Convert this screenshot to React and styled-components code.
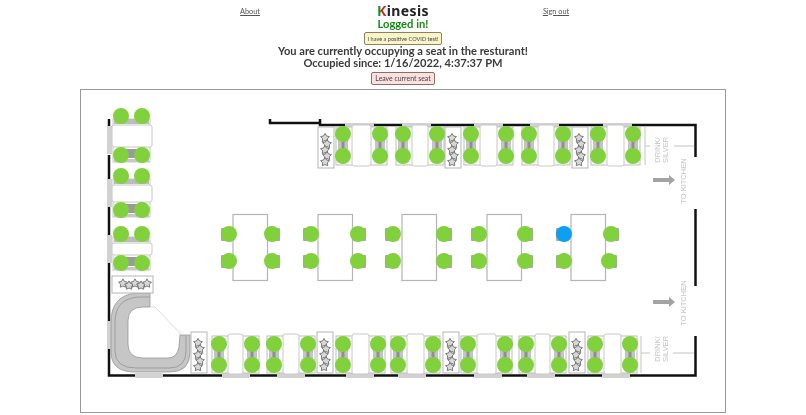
import React from 'react'
import styled, { createGlobalStyle } from 'styled-components'

const GlobalStyle = createGlobalStyle`
  html, body {
    margin: 0;
    background: #fff;
  }
  body {
    font-family: Lato, "Noto Sans", sans-serif;
    color: #3a3a3a;
  }
`

const Page = styled.div`
  width: 806px;
  height: 415px;
  display: flex;
  flex-direction: column;
  align-items: center;
  overflow: hidden;
  filter: blur(0.35px);
`
const TopBar = styled.header`
  display: grid;
  grid-template-columns: repeat(3, 153px);
  justify-items: center;
  align-items: center;
  height: 14px;
  margin-top: 4px;
`
const NavLink = styled.a`
  font-size: 7.3px;
  color: #555;
  text-decoration: underline;
`
const Brand = styled.h1`
  margin: 0;
  font-family: "Noto Sans", sans-serif;
  font-size: 14px;
  line-height: 14px;
  font-weight: 700;
  letter-spacing: 0.4px;
  color: #222;
  span {
    background: linear-gradient(90deg, #1d8a2c 0 45%, #d8201c 45% 100%);
    -webkit-background-clip: text;
    background-clip: text;
    color: transparent;
  }
`
const LoggedIn = styled.div`
  font-size: 11.2px;
  line-height: 12px;
  font-weight: 700;
  color: #168a16;
`
const ActionButton = styled.button`
  display: block;
  height: 13px;
  margin-top: ${p => p.$gap}px;
  padding: 0 3px;
  font-family: inherit;
  font-size: ${p => p.$size}px;
  line-height: 11px;
  color: #444;
  border: 1px solid ${p => p.$edge};
  border-radius: 2px;
  background: ${p => p.$fill};
`
const Notice = styled.div`
  font-size: 11.1px;
  line-height: 12px;
  font-weight: 700;
  text-align: center;
`
const FloorMap = styled.div`
  position: relative;
  box-sizing: border-box;
  width: 646px;
  height: 324px;
  margin-top: 4px;
  border: 1px solid #9a9a9a;
`
const FloorPlan = styled.svg`
  display: block;
  width: 644px;
  height: 322px;
`
const Seat = styled.div`
  position: absolute;
  width: 16px;
  height: 16px;
  border-radius: 50%;
  background: ${p => (p.$mine ? '#0d9ff0' : '#80d13b')};
`

const LEFT_PAIRS = [[116, 155], [176, 210], [234, 263]]
const TOP_PAIRS = [[343, 380], [403, 437], [471, 506], [529, 563], [598, 633]]
const BOTTOM_PAIRS = [[219, 252], [274, 308], [343, 378], [398, 433], [468, 505], [526, 559], [595, 630]]
const MIDDLE_TABLES = [
  { x: 233, seats: [229, 272], low: [229, 272] },
  { x: 318, seats: [311, 358], low: [311, 358] },
  { x: 402, seats: [393, 444], low: [393, 444] },
  { x: 487, seats: [479, 525], low: [479, 525] },
  { x: 571, seats: [564, 611], low: [564, 609] },
]
const PLANTERS = [
  [318, 127, false], [445, 127, false], [572, 127, false],
  [191, 332, false], [317, 332, false], [443, 332, false], [569, 332, false],
  [112, 276, true],
]
const WALLS = [
  'M109 119V126', 'M109 155V179', 'M109 207V235', 'M109 263V321', 'M109 349V375.5H695.5V336',
  'M695.5 157V125H320V119', 'M320 123H270V119', 'M695.5 209V286',
]
const TOP_WINDOWS = [345, 402, 474, 530, 603]
const BOTTOM_WINDOWS = [135, 222, 277, 346, 398, 474, 527, 602]
const LEFT_WINDOWS = [126, 179, 235, 321]

const seats = [
  ...LEFT_PAIRS.flatMap(([a, b]) => [[121, a], [142, a], [121, b], [142, b]]),
  ...TOP_PAIRS.flatMap(([a, b]) => [[a, 134], [a, 156], [b, 134], [b, 156]]),
  ...BOTTOM_PAIRS.flatMap(([a, b]) => [[a, 344], [a, 365], [b, 344], [b, 365]]),
  ...MIDDLE_TABLES.flatMap(t => [[t.seats[0], 234], [t.seats[1], 234], [t.low[0], 261], [t.low[1], 261]]),
]

const starPoints = (cx, cy, r) =>
  Array.from({ length: 10 }, (_, i) => {
    const a = (Math.PI / 5) * i - Math.PI / 2
    const d = i % 2 ? r * 0.55 : r
    return `${(cx + d * Math.cos(a)).toFixed(1)},${(cy + d * Math.sin(a)).toFixed(1)}`
  }).join(' ')

const Planter = ({ x, y, flat }) => {
  const w = flat ? 41 : 16
  const h = flat ? 17 : 41
  return (
    <g>
      <rect x={x} y={y} width={w} height={h} fill="#fff" stroke="#b5b5b5" />
      {[0, 1, 2, 3, 4].map(i => {
        const along = 9 + i * 6
        const across = i % 2 ? 1 : -1
        const cx = flat ? x + along + 2 : x + 8 + across
        const cy = flat ? y + 8.5 + across : y + along + 2
        return (
          <polygon key={i} points={starPoints(cx, cy, 4.6)} fill="#d8d8d8" stroke="#6e6e6e" strokeWidth="0.9" />
        )
      })}
    </g>
  )
}

const RowBooth = ({ a, b, y1, y2 }) => (
  <g>
    <rect x={a - 7} y={y1} width={b - a + 14} height={y2 - y1} fill="#fff" stroke="#bdbdbd" />
    <rect x={a - 5} y={y1 + 4} width="10" height={y2 - y1 - 8} fill="#c4c4c4" />
    <rect x={a - 1.5} y={y1 + 4} width="3" height={y2 - y1 - 8} fill="#8f8f8f" />
    <rect x={b - 5} y={y1 + 4} width="10" height={y2 - y1 - 8} fill="#c4c4c4" />
    <rect x={b - 1.5} y={y1 + 4} width="3" height={y2 - y1 - 8} fill="#8f8f8f" />
    <rect x={a + 9} y={y1 - 2} width={b - a - 18} height={y2 - y1 + 3} rx="2" fill="#fff" stroke="#c8c8c8" />
  </g>
)

const ColumnBooth = ({ a, b }) => (
  <g>
    <rect x="113" y={a + 3} width="37" height={b - a + 4} fill="#fff" stroke="#c8c8c8" />
    <rect x="114" y={a + 3} width="35" height="5" fill="#bcbcbc" />
    <rect x="114" y={b - 5} width="35" height="8" fill="#fff" />
    <rect x="126" y={b - 6} width="11" height="9" fill="#9a9a9a" />
    <rect x="114" y={b + 4} width="35" height="3" fill="#c8c8c8" />
    <rect x="112" y={a + 9} width="40" height={b - a - 17} rx="2" fill="#fff" stroke="#c8c8c8" />
  </g>
)

const Arrow = ({ y }) => (
  <path d={`M653 ${y - 2}H669V${y - 5}L675 ${y}L669 ${y + 5}V${y + 2}H653Z`} fill="#a3a3a3" />
)

const SideLabel = ({ x, y, children, size = 7.5 }) => (
  <text
    x={x}
    y={y}
    transform={`rotate(-90 ${x} ${y})`}
    textAnchor="middle"
    fontFamily="Liberation Sans, sans-serif"
    fontSize={size}
    fill="#c4c4c4"
  >
    {children}
  </text>
)

const App = () => (
  <Page>
    <GlobalStyle />
    <TopBar>
      <NavLink>About</NavLink>
      <Brand><span>K</span>inesis</Brand>
      <NavLink>Sign out</NavLink>
    </TopBar>
    <LoggedIn>Logged in!</LoggedIn>
    <ActionButton $gap={2} $fill="#f9f4c9" $edge="#8f8158" $size={5.6}>I have a positive COVID test!</ActionButton>
    <Notice>
      You are currently occupying a seat in the resturant!
      <br />
      Occupied since: 1/16/2022, 4:37:37 PM
    </Notice>
    <ActionButton $gap={3} $fill="#fbe0df" $edge="#8f6d64" $size={6.9}>Leave current seat</ActionButton>
    <FloorMap>
      <FloorPlan viewBox="81 90 644 322">
        {LEFT_WINDOWS.map(y => <rect key={y} x="107" y={y} width="5" height="28" fill="#d2d2d2" />)}
        {WALLS.map(d => <path key={d} d={d} fill="none" stroke="#111" strokeWidth="2.5" />)}
        {TOP_WINDOWS.map(x => <rect key={x} x={x} y="123" width="29" height="4" fill="#d2d2d2" />)}
        {BOTTOM_WINDOWS.map(x => <rect key={x} x={x} y="373" width="28" height="5" rx="1" fill="#d2d2d2" />)}
        <path d="M645 127V165M645 146H650M674 146H694M641 336V373M641 353H650M673 353H694" fill="none" stroke="#c4c4c4" />
        <path
          d="M150 293H137Q111 295 111 322V352Q111 372 135 372H170Q190 372 190 352V335H180L179 347Q177 358 168 358H143Q128 358 128 344V321Q128 307 143 307H150Z"
          fill="#c6c6c6"
          stroke="#8c8c8c"
          strokeWidth="0.7"
        />
        <path
          d="M150 297H138Q115 299 115 322V351Q115 368 136 368H169Q186 368 186 351V336"
          fill="none"
          stroke="#8c8c8c"
          strokeWidth="0.7"
        />
        <path d="M150 307H155L180 333V335" fill="none" stroke="#dcdcdc" />
        {LEFT_PAIRS.map(([a, b]) => <ColumnBooth key={a} a={a} b={b} />)}
        {TOP_PAIRS.map(([a, b]) => <RowBooth key={a} a={a} b={b} y1={127} y2={165} />)}
        {BOTTOM_PAIRS.map(([a, b]) => <RowBooth key={a} a={a} b={b} y1={336} y2={373} />)}
        {PLANTERS.map(([x, y, flat]) => <Planter key={x + '-' + y} x={x} y={y} flat={flat} />)}
        {MIDDLE_TABLES.map(t => {
          const pairs = [[t.seats[0], 234], [t.seats[1], 234], [t.low[0], 261], [t.low[1], 261]]
          return (
            <g key={t.x}>
              {pairs.map(([x, y]) => (
                <rect
                  key={x + '-' + y}
                  x={x < t.x ? x - 8 : x - 5}
                  y={y - 6}
                  width="13"
                  height="13"
                  rx="1"
                  fill="#a8a8a8"
                />
              ))}
              <rect x={t.x} y="214.5" width="34.5" height="66" fill="#fff" stroke="#b4b4b4" strokeWidth="1.2" />
            </g>
          )
        })}
        <SideLabel x={660} y={150}>DRINK/</SideLabel>
        <SideLabel x={668} y={150}>SILVER</SideLabel>
        <SideLabel x={660} y={349}>DRINK/</SideLabel>
        <SideLabel x={668} y={349}>SILVER</SideLabel>
        <SideLabel x={686} y={181}>TO KITCHEN</SideLabel>
        <SideLabel x={686} y={303}>TO KITCHEN</SideLabel>
        <Arrow y={180} />
        <Arrow y={302} />
      </FloorPlan>
      {seats.map(([x, y]) => (
        <Seat
          key={x + '-' + y}
          $mine={x === 564 && y === 234}
          style={{ left: x - 89, top: y - 98 }}
        />
      ))}
    </FloorMap>
  </Page>
)

export default App
